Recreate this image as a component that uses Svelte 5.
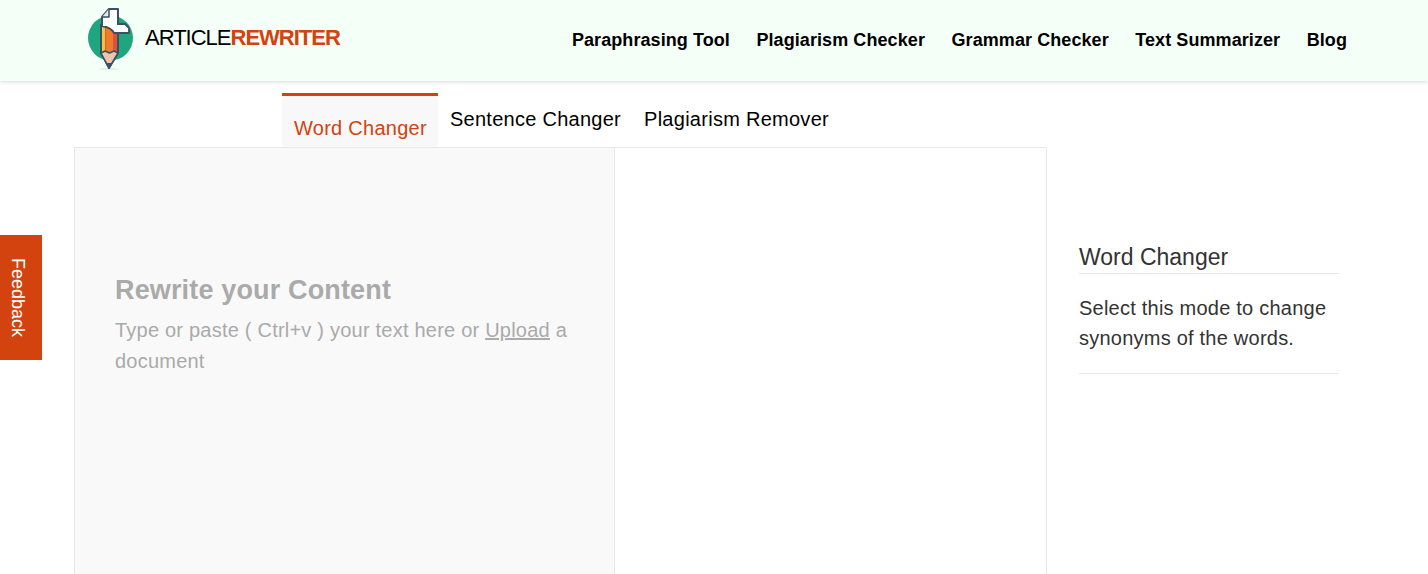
<script>
  const nav = ['Paraphrasing Tool', 'Plagiarism Checker', 'Grammar Checker', 'Text Summarizer', 'Blog'];
</script>

<header class="header">
  <a class="logo" href="#top">
    <svg class="mark" viewBox="0 0 46 72" width="46" height="72" aria-hidden="true">
      <ellipse cx="21" cy="69" rx="10" ry="1.2" fill="#e3efe8" />
      <circle cx="22.500" cy="38" r="22.500" fill="#1fa67f" />
      <path d="M13 26H30V53H13Z" fill="#f07b2c" />
      <path d="M13 26H17.500V53H13Z" fill="#f3c33e" />
      <path d="M25.500 30H30V53H25.500Z" fill="#e0503f" />
      <path d="M13 24V53L21 68L30 53V32" fill="none" stroke="#3d4f60" stroke-width="2" stroke-linejoin="round" />
      <path d="M17.500 27V53M25.500 32V53" stroke="#c9553a" stroke-width="0.800" />
      <path d="M13 53L17 51L21.500 53L26 51L30 53L21 68Z" fill="#e9c6ad" stroke="#3d4f60" stroke-width="1.500" stroke-linejoin="round" />
      <path d="M18.500 63L21 68L23.500 63Z" fill="#3d4f60" />
      <path d="M14 17L21 9H30V24H14Z" fill="#fff" stroke="#3d4f60" stroke-width="2" stroke-linejoin="round" />
      <path d="M14 17H21V9" fill="#e4e9ec" stroke="#3d4f60" stroke-width="1.500" stroke-linejoin="round" />
      <path d="M14 24H37L41 28V33H26C24 29 20 27 14 26Z" fill="#fff" stroke="#3d4f60" stroke-width="1.800" stroke-linejoin="round" />
      <path d="M15 22H29V26H15Z" fill="#fff" />
    </svg>
    <span class="wordmark">ARTICLE<b>REWRITER</b></span>
  </a>
  <nav class="nav">
    {#each nav as item}
      <a href="#top">{item}</a>
    {/each}
  </nav>
</header>

<main class="main">
  <div class="tabs">
    <button class="tab active">Word Changer</button>
    <button class="tab">Sentence Changer</button>
    <button class="tab">Plagiarism Remover</button>
  </div>
  <div class="row">
    <section class="editor">
      <div class="input">
        <h2>Rewrite your Content</h2>
        <p>Type or paste ( Ctrl+v ) your text here or <u>Upload</u> a document</p>
      </div>
      <div class="output"></div>
    </section>
    <aside class="side">
      <h3>Word Changer</h3>
      <p>Select this mode to change synonyms of the words.</p>
    </aside>
  </div>
</main>

<div class="feedback"><span>Feedback</span></div>

<style>
  :global(body) {
    margin: 0;
    background: #fff;
    overflow: hidden;
    font-family: "Liberation Sans", Arial, sans-serif;
  }
  a { color: inherit; text-decoration: none; }
  .header {
    height: 81px;
    background: #f4fff8;
    box-shadow: 0 1px 4px rgba(0, 0, 0, 0.15);
    display: flex;
    align-items: flex-start;
    justify-content: space-between;
    padding: 0 81px 0 88px;
  }
  .logo { display: flex; align-items: flex-start; }
  .mark { flex: none; }
  .wordmark {
    margin-left: 11px;
    margin-top: 25px;
    font-size: 22px;
    line-height: 25px;
    letter-spacing: -1px;
    color: #000;
  }
  .wordmark b { color: #d2430f; }
  .nav {
    display: flex;
    gap: 26.500px;
    margin-top: 30px;
    font-size: 18px;
    line-height: 21px;
    font-weight: 700;
    letter-spacing: 0.08px;
    color: #000;
  }
  .main { padding-left: 74px; height: 493px; overflow: hidden; }
  .tabs { display: flex; padding-left: 208px; height: 66px; align-items: flex-start; padding-top: 12px; box-sizing: border-box; }
  .tab {
    border: 0;
    background: none;
    font: inherit;
    font-size: 20px;
    line-height: 23px;
    letter-spacing: 0.27px;
    color: #000;
    padding: 15px 11px 0 12px;
  }
  .tab.active {
    height: 54px;
    border-top: 3px solid #d2430f;
    background: #f8f8f8;
    color: #d2430f;
    padding-top: 14px;
    align-self: flex-start;
    vertical-align: top;
  }
  .row { display: flex; }
  .editor {
    width: 971px;
    height: 500px;
    border: 1px solid #e8e8e8;
    display: flex;
    flex: none;
  }
  .input {
    width: 540px;
    background: #f9f9f9;
    border-right: 1px solid #e8e8e8;
    padding: 126px 40px 0 40px;
    box-sizing: border-box;
    flex: none;
  }
  .input h2 {
    margin: 0;
    font-size: 27px;
    line-height: 32px;
    font-weight: 700;
    letter-spacing: 0.15px;
    color: #aaa;
  }
  .input p {
    margin: 9px 0 0;
    font-size: 20px;
    line-height: 31px;
    letter-spacing: 0.22px;
    color: #aaa;
  }
  .side { width: 260px; margin-left: 32px; padding-top: 95px; color: #333; }
  .side h3 {
    margin: 0;
    font-size: 23px;
    font-weight: 400;
    line-height: 30px;
    padding-bottom: 1px;
    border-bottom: 1px solid #e8e8e8;
  }
  .side p {
    margin: 0;
    padding: 19px 0 20px;
    font-size: 20px;
    line-height: 30px;
    letter-spacing: 0.23px;
    border-bottom: 1px solid #e8e8e8;
  }
  .feedback {
    position: fixed;
    left: 0;
    top: 235px;
    width: 42px;
    height: 125px;
    box-sizing: border-box;
    padding-right: 8px;
    background: #d2430f;
    color: #fff;
    display: flex;
    align-items: center;
    justify-content: center;
    font-size: 18px;
  }
  .feedback span { writing-mode: vertical-rl; }
</style>
